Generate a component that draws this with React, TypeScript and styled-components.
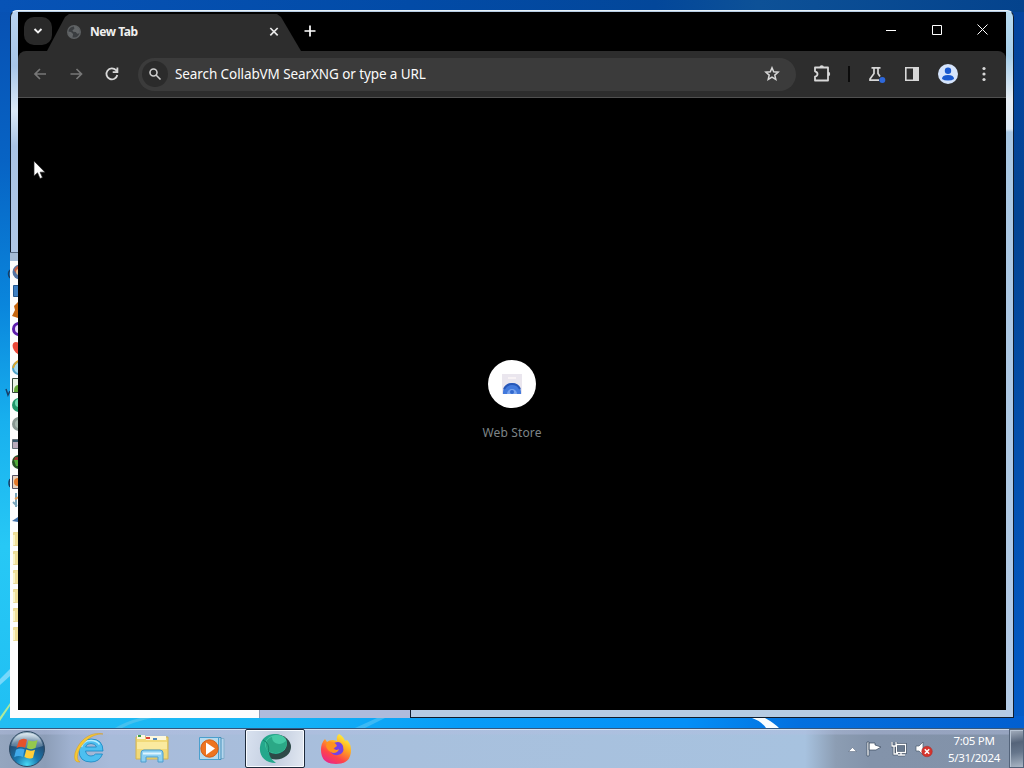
import React from "react";
import styled, { createGlobalStyle } from "styled-components";

const Global = createGlobalStyle`
  * { box-sizing: border-box; }
  body { margin: 0; overflow: hidden; font-family: "Noto Sans", "Open Sans", sans-serif; }
  svg { display: block; flex: none; }
`;

const Screen = styled.div`
  width: 1024px;
  height: 768px;
  display: grid;
  grid-template-rows: 728px 40px;
  overflow: hidden;
`;

const Desktop = styled.main`
  position: relative;
  overflow: hidden;
  background:
    linear-gradient(90deg, #0753b6 0%, #024ba7 40%, #03479a 64%, #0d5197 74%, #04438d 100%) top / 100% 12px no-repeat,
    linear-gradient(90deg, #22bdf2 0%, #16b4f5 27%, #079cf7 45%, #048ff6 67%, #0370df 78%, #025fd0 100%) bottom / 100% 12px no-repeat,
    linear-gradient(180deg, #0445a0 0%, #034493 30%, #0451b0 65%, #035cc8 100%) right / 14px 100% no-repeat,
    linear-gradient(180deg, #0750b2 0%, #0763c4 22%, #0a86dc 42%, #18b0ee 58%, #27c8f5 75%, #20bff3 100%);
`;

const Wallpaper = styled.svg`
  position: absolute;
  inset: 0;
`;

const AeroFrame = styled.div`
  position: absolute;
  left: 10px;
  top: 10px;
  width: 1004px;
  height: 708px;
  border: 1px solid #101c2c;
  border-top-color: #e9f3fa;
  border-radius: 7px 7px 0 0;
  background:
    linear-gradient(180deg, #b9dcf1 0, #a8d0eb 45px, #e7eef5 88px, #dce9f5 118px, #a9c8e4 121px, #b4cbe6 100%) right / 8px 100% no-repeat,
    linear-gradient(180deg, #b9d3ef 0, #a7c6e9 55px, #dbe9f6 100px, #a9c3e4 135px, #c7d8ee 100%) left / 8px 100% no-repeat,
    #b5cbe3;
`;

const BackWindow = styled.section`
  position: absolute;
  left: 10px;
  top: 252px;
  width: 401px;
  height: 466px;
  display: grid;
  grid-template: 457px 8px / 249px 152px;
  overflow: hidden;
  background: #fcfcfd;
  border-top: 1px solid #566a85;
`;

const IconStrip = styled.div`
  width: 8px;
  height: 457px;
  padding: 9px 0 0 2px;
  overflow: hidden;
  background: linear-gradient(#a4bbd6 0 8px, #fdfdfd 8px);
`;

const StatusPart = styled.div`
  grid-column: 2;
  grid-row: 2;
  background: #aebbdc;
  border-left: 1px solid #8d9ab4;
  border-right: 1px solid #101c2c;
`;

const StripCell = styled.div`
  height: 19.1px;
  display: flex;
  align-items: center;
`;

const Browser = styled.section`
  position: absolute;
  left: 18px;
  top: 12px;
  width: 988px;
  height: 698px;
  display: flex;
  flex-direction: column;
  background: #000;
  overflow: hidden;
`;

const TabBar = styled.header`
  height: 39px;
  display: flex;
  align-items: flex-start;
  padding-left: 6px;
`;

const TabSearch = styled.button`
  width: 28px;
  height: 28px;
  margin-top: 5px;
  padding: 0;
  border: 0;
  border-radius: 10px;
  background: #292929;
  color: #f2f2f2;
  display: grid;
  place-items: center;
`;

const Tab = styled.div`
  width: 254px;
  height: 37px;
  margin: 2px 0 0 -5px;
  padding: 0 19px 2px 20px;
  display: flex;
  align-items: center;
  background: #2d2d2d;
  clip-path: polygon(0 100%, 18px 3px, 22px 0, 230px 0, 234px 3px, 254px 100%);
`;

const TabTitle = styled.span`
  flex: 1;
  margin-left: 9px;
  font-size: 12px;
  font-weight: 700;
  letter-spacing: -0.45px;
  color: #f0f0f0;
`;

const PlainButton = styled.button<{ $w?: number; $h?: number; $c?: string }>`
  width: ${(p) => p.$w ?? 36}px;
  height: ${(p) => p.$h ?? 36}px;
  padding: 0;
  border: 0;
  background: none;
  color: ${(p) => p.$c ?? "#d8d8d8"};
  display: grid;
  place-items: center;
  flex: none;
`;

const NewTabSlot = styled.div`
  margin-left: -1px;
`;

const WindowButtons = styled.div`
  margin-left: auto;
  display: flex;
`;

const Toolbar = styled.div`
  height: 47px;
  padding: 0 4px;
  display: flex;
  align-items: center;
  background: #2d2d2d;
  border-bottom: 1px solid #505050;
  border-radius: 8px 8px 0 0;
`;

const Omnibox = styled.div`
  width: 658px;
  height: 33px;
  margin-left: 8px;
  padding: 0 6px 0 4px;
  border-radius: 17px;
  background: #3b3b3b;
  display: flex;
  align-items: center;
`;

const SearchBadge = styled.div`
  width: 26px;
  height: 26px;
  border-radius: 50%;
  background: #2b2b2b;
  color: #cfcfcf;
  display: grid;
  place-items: center;
`;

const Placeholder = styled.span`
  flex: 1;
  margin-left: 7px;
  font-size: 13.5px;
  letter-spacing: -0.09px;
  white-space: nowrap;
  color: #fafafa;
`;

const Divider = styled.div`
  width: 2px;
  height: 16px;
  margin-right: 8px;
  background: #0b0b0b;
`;

const NewTabPage = styled.div`
  flex: 1;
  padding-top: 262px;
  display: flex;
  flex-direction: column;
  align-items: center;
`;

const Shortcut = styled.div`
  width: 48px;
  height: 48px;
  border-radius: 50%;
  background: #fff;
  display: grid;
  place-items: center;
`;

const ShortcutLabel = styled.span`
  margin-top: 16px;
  font-size: 12px;
  line-height: 17px;
  letter-spacing: 0.15px;
  color: #7d8487;
`;

const Pointer = styled.svg`
  position: absolute;
  left: 33px;
  top: 160px;
`;

const Taskbar = styled.footer`
  display: flex;
  border-top: 1px solid #34577f;
  background:
    linear-gradient(180deg, rgba(228, 239, 250, 0.75) 0 1px, rgba(180, 190, 225, 0.4) 1px 5px, transparent 6px),
    linear-gradient(90deg, #95a6bf 0, #8c9db7 45px, #9fb1cf 70px, #a8bbda 110px, #a8c0dd 400px, #a7c2df 805px, #8c9db3 836px, #8393aa 870px, #8292a9 100%);
`;

const TaskButton = styled.div<{ $active?: boolean; $w?: number }>`
  width: ${(p) => p.$w ?? 62}px;
  height: 39px;
  display: grid;
  place-items: center;
  border: 1px solid ${(p) => (p.$active ? "#1d2a3c" : "transparent")};
  border-radius: 2px;
  box-shadow: ${(p) => (p.$active ? "inset 0 0 0 1px #f8fbff" : "none")};
  background: ${(p) => (p.$active ? "linear-gradient(100deg, #d9e2f0, #c2cddf 50%, #e3e9f2)" : "none")};
`;

const Tray = styled.div`
  margin-left: auto;
  display: flex;
  align-items: center;
`;

const TrayIcons = styled.div`
  display: flex;
  align-items: center;
  gap: 8px;
  padding-top: 1px;
`;

const Clock = styled.div`
  width: 73px;
  margin-left: 3px;
  padding: 1px 0 0 3px;
  text-align: center;
  font-size: 11.5px;
  line-height: 17px;
  letter-spacing: -0.3px;
  white-space: nowrap;
  color: #fff;
`;

const ShowDesktop = styled.div`
  width: 15px;
  height: 39px;
  border: 1px solid #53637a;
  box-shadow: inset 1px 1px 0 #b6c3d3;
  background: linear-gradient(170deg, #a5b0bf, #55647a 35%, #65758b 60%, #a9b5c4);
`;

const ArrowIcon = ({ flip }: { flip?: boolean }) => (
  <svg width="16" height="16" viewBox="0 0 16 16" fill="none" stroke="currentColor" strokeWidth="1.7">
    <path d={flip ? "M2.500 8h11M8.500 3l5 5-5 5" : "M14 8H3M8 3 3 8l5 5"} />
  </svg>
);

const BlankGlobe = () => (
  <svg width="14" height="14" viewBox="0 0 14 14">
    <circle cx="7" cy="7" r="6.3" fill="#3a3d40" stroke="#5e6163" strokeWidth="1.4" />
    <path d="M1 6.4 4 7l2.1 2.1-.7 3.7C2.8 12 1 10 1 6.4ZM7 1c-.4 1.4.8 1.7.2 3L5.4 5.2l.8 1.6 2.6.3 1.4 1.6 2.6-.4C13.3 4.5 11 1.4 7 1Z" fill="#626567" />
  </svg>
);

const stripIcons: React.ReactNode[] = [
  <><circle cx="8" cy="8" r="7.500" fill="#5475a5" /><path d="M2 6q5-8 12-5v7L4 9Z" fill="#c65e43" /><circle cx="7" cy="8" r="3" fill="#e8c295" /></>,
  <path d="M1.500 2.500h13v11h-13Z" fill="#3e7fc2" stroke="#24578e" />,
  <path d="M6 0 2 4l1 4-3 6 6 2 5-6Z" fill="#c5650e" />,
  <circle cx="7" cy="8" r="5.500" fill="#e9dcf8" stroke="#5d1cab" strokeWidth="3" />,
  <path d="M7 15C-1 10-1 2 4 2q3 0 4 3Z" fill="#ea4939" />,
  <><circle cx="7" cy="9" r="6" fill="#a6d9ee" stroke="#50a3c8" strokeWidth="2" /><path d="M1 9q2-7 8-8" stroke="#dca62e" strokeWidth="2" fill="none" /></>,
  <><path d="M.5.5h13v14H.5Z" fill="#e9f4e4" stroke="#35473a" /><path d="M2 13q0-6 5-6v7H2Z" fill="#66aa39" /></>,
  <><circle cx="7" cy="8" r="7" fill="#23986c" /><circle cx="7" cy="6" r="4" fill="#70dab3" /></>,
  <><circle cx="7" cy="8" r="7" fill="#8a9893" /><circle cx="7" cy="8" r="4" fill="#a9b9b1" /></>,
  <><path d="M.5 4.500h11v9H.5Z" fill="#b9aaba" stroke="#667078" /><path d="M1 6h9" stroke="#365669" strokeWidth="2" /></>,
  <><circle cx="7" cy="8" r="7" fill="#275425" /><path d="M2 6h6v6H4Z" fill="#52ab39" /><path d="M3 3h4v3H2Z" fill="#9b3830" /></>,
  <><path d="M.5 1.500h13v13H.5Z" fill="#e8d2bd" stroke="#565365" /><circle cx="6" cy="8" r="4" fill="#e27929" /></>,
  <><path d="M4 0v14M1 9l4 4" stroke="#7ba7bd" strokeWidth="2" /><path d="m3 6 4-2" stroke="#df9a56" strokeWidth="2" /></>,
  <path d="m0 9 6-4v5Z" fill="#4172a9" />,
];

const Folder = () => (
  <svg width="18" height="18" viewBox="0 0 18 18">
    <path d="M1.500 2.500h5l1 2h7v11h-13Z" fill="#efdf99" stroke="#ead994" />
    <path d="M1 5h2v10H1Z" fill="#faf3c8" />
  </svg>
);

const StartOrb = () => (
  <svg width="38" height="38" viewBox="0 0 38 38">
    <defs>
      <radialGradient id="orb" cx=".5" cy=".95" r=".95">
        <stop offset="0" stopColor="#46d9f5" /><stop offset=".35" stopColor="#1877ae" /><stop offset=".75" stopColor="#244b71" /><stop offset="1" stopColor="#a9bfcd" />
      </radialGradient>
      <linearGradient id="gloss" x2="0" y2="1"><stop stopColor="#eef7fc" stopOpacity=".85" /><stop offset="1" stopColor="#b6ccda" stopOpacity=".25" /></linearGradient>
    </defs>
    <circle cx="19" cy="19" r="17.5" fill="url(#orb)" stroke="#2d4963" />
    <path d="M3 16Q6 3 19 3t16 13q-8 3-16 2T3 16Z" fill="url(#gloss)" />
    <path d="M11 10.500q4-3 8-.8l-1.900 8q-4.300-2-8.600.4Z" fill="#e5522b" />
    <path d="M20.500 10.300q4.500 2.100 9-.3l-2 8q-4.300 2.300-8.700-.1Z" fill="#95c84d" />
    <path d="M8 19.800q4.300-2.300 8.600-.4l-1.800 7.500q-4.400-2-8.600.4Z" fill="#40a9e9" />
    <path d="M18.300 19.500q4.300 2.200 8.700.2l-2 8q-4.300 2-8.600-.6Z" fill="#ffce39" />
  </svg>
);

const InternetExplorer = () => (
  <svg width="34" height="34" viewBox="0 0 34 34">
    <path d="M31 19H13.500q1 5 5.500 5 3 0 4.500-2H30.500q-3 8-11.500 8Q7 30 7 18.500 7 7 19 7t12 12ZM13.500 15h11q-1-3.500-5.500-3.500T13.500 15Z" fill="#4dbff0" stroke="#1686c2" strokeWidth=".8" fillRule="evenodd" />
    <path d="M9.500 15q2-6.500 9.500-6.500 6 0 8.500 4" stroke="#b6edff" strokeWidth="1.500" fill="none" />
    <path d="M31 2C19-1 7 8 3 21q-2 10 5 9-4-2-2-9C9 11 20 1 31 2Z" fill="#f6c832" stroke="#d99a1b" strokeWidth=".5" />
  </svg>
);

const Explorer = () => (
  <svg width="34" height="34" viewBox="0 0 34 34">
    <path d="M1 5h32v22H1Z" fill="#f1d978" stroke="#d3b451" />
    <path d="M2 3h8v4H2Zm9 1h20v4H11Z" fill="#fdf8dd" />
    <path d="M3 3h3v2H3Z" fill="#3ca14a" /><path d="M11 5h4v2h-4Z" fill="#dc4337" /><path d="M18 6h4v2h-4Z" fill="#5188bd" />
    <path d="M2 10h30v7H2Z" fill="#faea9f" />
    <path d="M6 30v-9q0-3 3-3h16q3 0 3 3v9h-5v-5H11v5Z" fill="#8cd0f2" stroke="#4d9dcd" />
    <path d="M8 21.500h18" stroke="#def5ff" strokeWidth="2" />
  </svg>
);

const MediaPlayer = () => (
  <svg width="32" height="28" viewBox="0 0 32 28">
    <path d="M14 3.500h13v20H14Z" fill="#b5d6ed" stroke="#82afcc" />
    <path d="M10 2.500h14v22H10Z" fill="#a9cfe8" stroke="#4692bd" />
    <path d="M2.500 2.500h19v22h-19Z" fill="#b6dbef" stroke="#4b9fcd" />
    <circle cx="12.500" cy="13.500" r="8.700" fill="#ed7420" stroke="#d45f17" /><path d="m9 7.500 9 6-9 6.500Z" fill="#fff" />
  </svg>
);

const TealOrb = () => (
  <svg width="34" height="34" viewBox="0 0 34 34">
    <ellipse cx="18" cy="15" rx="15" ry="12.500" fill="#2d4a48" />
    <path d="M2 15C3 2 18-1 26 5l-1 3q6 8-1 12-6 4-13 0 0 6 7 11C7 31 1 24 2 15Z" fill="#24a88c" />
    <path d="M10 19C3 11 10 3 19 3q6 0 9 4 3 10-5 13-6 3-13-1Z" fill="#45c9a4" />
    <path d="M9 18Q5 8 14 5q0 6 7 7 4 0 8-4 0 10-6 12-8 3-14-2Z" fill="#2ba886" />
    <path d="M5 8q7 3 5.500 12" stroke="#168268" fill="none" />
  </svg>
);

const Firefox = () => (
  <svg width="32" height="32" viewBox="0 0 32 32">
    <defs><linearGradient id="fox" x1=".8" y1=".05" x2=".25" y2="1"><stop stopColor="#fff33f" /><stop offset=".35" stopColor="#ffab20" /><stop offset=".7" stopColor="#ff4548" /><stop offset="1" stopColor="#e8248b" /></linearGradient></defs>
    <path d="M19 1q5 3 6 7l2-1q4 4 4 10 0 14-15 14Q1 31 1 17q0-7 4-11l2 3q2-2 6-2l4 1q-1-5 2-7Z" fill="url(#fox)" />
    <path d="M12 11q8-5 11 2 2 8-5 9-7 1-8-6 3 4 6 1l-4-3Z" fill="#7542e5" />
    <path d="M7 9q8-1 10 4l-4 3q3 2 6 0-1 4-6 4-6-2-7-7Z" fill="#ff921f" />
  </svg>
);

export default function App() {
  return (
    <>
      <Global />
      <Screen>
        <Desktop>
          <Wallpaper width="1024" height="728">
            <path d="M0 679 10 669v7L0 685Z" fill="#76d8fb" />
            <path d="m0 717 10-14v3L0 721Z" fill="#aeea9b" />
            <path d="M115 728q12-7 25-10h12q-19 4-30 10Z" fill="#45c1ef" />
            <path d="m355 728 22-10h8l-20 10Z" fill="#3bb9f5" />
            <path d="M752 718h13q9 5 14 10h-13q-5-7-14-10Z" fill="#f8fdff" />
            <path d="M10 270q-3 4 0 8M6 389l2 6 2-4M10 479q-2 4 0 8" fill="none" stroke="#173f68" strokeWidth="1.500" />
          </Wallpaper>
          <AeroFrame />
          <BackWindow>
            <IconStrip>
              {stripIcons.map((art, i) => (
                <StripCell key={i}><svg width="18" height="16" viewBox="0 0 18 16">{art}</svg></StripCell>
              ))}
              {[0, 1, 2, 3, 4, 5].map((i) => <StripCell key={`f${i}`}><Folder /></StripCell>)}
            </IconStrip>
            <StatusPart />
          </BackWindow>
          <Browser>
            <TabBar>
              <TabSearch>
                <svg width="10" height="8" viewBox="0 0 10 8" fill="none" stroke="currentColor" strokeWidth="1.900"><path d="m1.500 2 3.500 3.500L8.500 2" /></svg>
              </TabSearch>
              <Tab>
                <BlankGlobe />
                <TabTitle>New Tab</TabTitle>
                <svg width="16" height="12" viewBox="0 0 16 12" stroke="#e9e9e9" strokeWidth="1.700"><path d="m4.300 2 7.400 7.400m0-7.400-7.400 7.400" /></svg>
              </Tab>
              <NewTabSlot>
                <PlainButton $w={20} $h={38} $c="#fff">
                  <svg width="12" height="12" viewBox="0 0 12 12" stroke="currentColor" strokeWidth="1.700"><path d="M6 .5v11M.5 6h11" /></svg>
                </PlainButton>
              </NewTabSlot>
              <WindowButtons>
                <PlainButton $w={46} $c="#fff"><svg width="11" height="11" stroke="currentColor"><path d="M0 5.500h10" /></svg></PlainButton>
                <PlainButton $w={46} $c="#fff"><svg width="10" height="10" fill="none" stroke="currentColor"><path d="M.5.5h9v9h-9Z" /></svg></PlainButton>
                <PlainButton $w={46} $c="#fff"><svg width="12" height="12" stroke="currentColor"><path d="m.5.5 10 10m0-10-10 10" /></svg></PlainButton>
              </WindowButtons>
            </TabBar>
            <Toolbar>
              <PlainButton $c="#777"><ArrowIcon /></PlainButton>
              <PlainButton $c="#777"><ArrowIcon flip /></PlainButton>
              <PlainButton>
                <svg width="16" height="16" viewBox="0 0 16 16" fill="none" stroke="currentColor" strokeWidth="1.800"><path d="M13.300 9A5.500 5.500 0 1 1 12 4.200l1.300 1.500M13.400 1.500v4.700H8.700" /></svg>
              </PlainButton>
              <Omnibox>
                <SearchBadge>
                  <svg width="14" height="14" viewBox="0 0 14 14" fill="none" stroke="currentColor" strokeWidth="1.600"><circle cx="5.500" cy="5.500" r="3.500" /><path d="m8 8 4.500 4.500" /></svg>
                </SearchBadge>
                <Placeholder>Search CollabVM SearXNG or type a URL</Placeholder>
                <PlainButton>
                  <svg width="16" height="16" viewBox="0 0 16 16" fill="none" stroke="currentColor" strokeWidth="1.500"><path d="m8 1.800 1.700 4 4.400.4-3.300 2.900 1 4.300L8 11.100l-3.800 2.300 1-4.300-3.300-2.900 4.400-.4Z" /></svg>
                </PlainButton>
              </Omnibox>
              <PlainButton $w={52} $h={40}>
                <svg width="20" height="20" viewBox="0 0 20 20" fill="none"><path d="M3 3.500h13v13H3v-3.800q2.500-.5 2.500-2.700T3 7.300Z" stroke="currentColor" strokeWidth="1.800" strokeLinejoin="round" /><path d="M7.500 3.500a2.200 2.200 0 0 1 4.400 0ZM16 7.800a2.200 2.200 0 0 1 0 4.400Z" fill="currentColor" /></svg>
              </PlainButton>
              <Divider />
              <PlainButton>
                <svg width="20" height="20" viewBox="0 0 20 20" fill="none" stroke="currentColor" strokeWidth="1.700"><path d="M5.500 3.800h9M8 4v5.500L4 15v1.200h9M12 4v5.500l2 3" /><circle cx="16.300" cy="16" r="3" fill="#2e68db" stroke="none" /></svg>
              </PlainButton>
              <PlainButton>
                <svg width="16" height="16" viewBox="0 0 16 16"><path d="M1.800 1.800h12.400v12.400H1.800Z" fill="none" stroke="currentColor" strokeWidth="1.600" /><path d="M9 1h6v14H9Z" fill="currentColor" /></svg>
              </PlainButton>
              <PlainButton>
                <svg width="20" height="20" viewBox="0 0 20 20"><circle cx="10" cy="10" r="10" fill="#d5e4fc" /><circle cx="10" cy="6.800" r="3.200" fill="#1959cf" /><path d="M4 15q0-4 6-4t6 4q-2 1.500-6 1.500T4 15Z" fill="#1959cf" /></svg>
              </PlainButton>
              <PlainButton>
                <svg width="6" height="16" viewBox="0 0 6 16" fill="currentColor"><circle cx="3" cy="2.500" r="1.600" /><circle cx="3" cy="8" r="1.600" /><circle cx="3" cy="13.500" r="1.600" /></svg>
              </PlainButton>
            </Toolbar>
            <NewTabPage>
              <Shortcut>
                <svg width="22" height="20" viewBox="0 0 22 20">
                  <path d="M1 0h20v20H1Z" fill="#eae6ee" /><path d="M7 3h8v2H7Z" fill="#f8f3f5" />
                  <path d="M2 20v-2a9 9 0 0 1 18 0v2Z" fill="#4279dc" /><path d="M3 15a9 9 0 0 1 16 0" fill="none" stroke="#2757b8" strokeWidth="2" />
                  <path d="M6 20a5 5 0 0 1 10 0" fill="#79a4ee" /><circle cx="11" cy="18" r="2" fill="#3269ce" />
                </svg>
              </Shortcut>
              <ShortcutLabel>Web Store</ShortcutLabel>
            </NewTabPage>
          </Browser>
          <Pointer width="13" height="20" viewBox="0 0 13 20"><path d="M1 1v15l3.500-3.200L7 18.500l2.500-1-2.400-5.300H12Z" fill="#fff" stroke="#222" strokeWidth=".7" /></Pointer>
        </Desktop>
        <Taskbar>
          <TaskButton $w={54}><StartOrb /></TaskButton>
          <TaskButton $w={70}><InternetExplorer /></TaskButton>
          <TaskButton $w={56}><Explorer /></TaskButton>
          <TaskButton $w={65}><MediaPlayer /></TaskButton>
          <TaskButton $w={60} $active><TealOrb /></TaskButton>
          <TaskButton $w={62}><Firefox /></TaskButton>
          <Tray>
            <TrayIcons>
              <svg width="9" height="5" viewBox="0 0 9 5"><path d="M.5 4.500 4.500.5l4 4Z" fill="#fff" stroke="#526176" strokeWidth=".5" /></svg>
              <svg width="18" height="16" viewBox="0 0 18 16" fill="#fff" stroke="#38485d" strokeWidth=".7"><path d="M2 1h2v14H2ZM4 2h6v2l6 2-5 3H4Z" /></svg>
              <svg width="16" height="16" viewBox="0 0 16 16" fill="none"><path d="M5.500 3.500h9v8h-9ZM7 14h7M10 12v2M1 1v4h4V1M3 5v8h4" stroke="#324156" strokeWidth="2.500" /><path d="M5.500 3.500h9v8h-9ZM7 14h7M10 12v2M1 1v4h4V1M3 5v8h4" stroke="#fff" strokeWidth="1.300" /><path d="M7 5h6v5H7Z" fill="#69798e" /></svg>
              <svg width="18" height="18" viewBox="0 0 18 18"><path d="M1 6h3l4-4v13l-4-4H1Z" fill="#fff" stroke="#4c5b6e" strokeWidth=".7" /><circle cx="12" cy="11.500" r="5.300" fill="#d5342d" stroke="#a62c2b" strokeWidth=".5" /><path d="m9.800 9.300 4.400 4.400m0-4.400-4.400 4.400" stroke="#fff" strokeWidth="1.500" /></svg>
            </TrayIcons>
            <Clock><div>7:05 PM</div><div>5/31/2024</div></Clock>
            <ShowDesktop />
          </Tray>
        </Taskbar>
      </Screen>
    </>
  );
}
